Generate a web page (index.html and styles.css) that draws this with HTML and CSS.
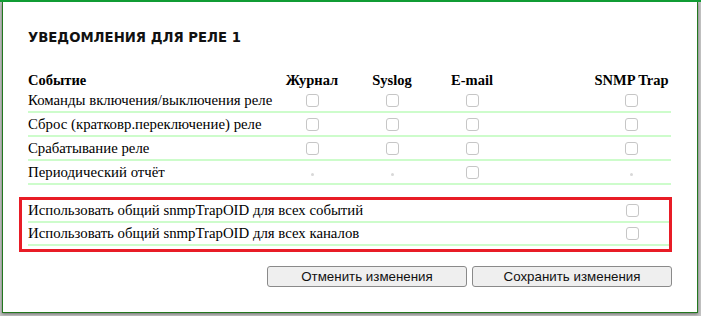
FILE: index.html
```html
<!DOCTYPE html>
<html>
<head>
	<meta charset='utf-8'/>
	<title>Уведомления для реле 1</title>
	<link rel="stylesheet" href="styles.css">
</head>
<body>

	<div class="dialog">
		<h1 class="title">УВЕДОМЛЕНИЯ ДЛЯ РЕЛЕ 1</h1>

		<div class="grid head">
			<div class="name">Событие</div>
			<div class="c">Журнал</div>
			<div class="c">Syslog</div>
			<div class="c">E-mail</div>
			<div></div>
			<div class="c">SNMP Trap</div>
		</div>

		<div class="grid row">
			<div class="name">Команды включения/выключения реле</div>
			<div class="c"><input type="checkbox"/></div>
			<div class="c"><input type="checkbox"/></div>
			<div class="c"><input type="checkbox"/></div>
			<div></div>
			<div class="c"><input type="checkbox"/></div>
		</div>
		<div class="grid row">
			<div class="name">Сброс (кратковр.переключение) реле</div>
			<div class="c"><input type="checkbox"/></div>
			<div class="c"><input type="checkbox"/></div>
			<div class="c"><input type="checkbox"/></div>
			<div></div>
			<div class="c"><input type="checkbox"/></div>
		</div>
		<div class="grid row">
			<div class="name">Срабатывание реле</div>
			<div class="c"><input type="checkbox"/></div>
			<div class="c"><input type="checkbox"/></div>
			<div class="c"><input type="checkbox"/></div>
			<div></div>
			<div class="c"><input type="checkbox"/></div>
		</div>
		<div class="grid row">
			<div class="name">Периодический отчёт</div>
			<div class="c"><span class="dot"></span></div>
			<div class="c"><span class="dot"></span></div>
			<div class="c"><input type="checkbox"/></div>
			<div></div>
			<div class="c"><span class="dot"></span></div>
		</div>

		<div class="highlight">
			<div class="opt">
				<div class="name">Использовать общий snmpTrapOID для всех событий</div>
				<input type="checkbox"/>
			</div>
			<div class="opt">
				<div class="name">Использовать общий snmpTrapOID для всех каналов</div>
				<input type="checkbox"/>
			</div>
		</div>

		<div class="buttons">
			<button>Отменить изменения</button>
			<button>Сохранить изменения</button>
		</div>
	</div>

</body>
</html>
```

FILE: styles.css
```css
*{
	margin:0;padding:0;
	box-sizing:border-box;
}
body{
	background:#c4c4c4;
	width:701px;
	height:316px;
	overflow:hidden;
	border-top:2px solid #109c34;
	font-family:"Liberation Serif","Times New Roman",serif;
	font-size:14.8px;
	color:#000;
}

.dialog{
	width:696px;
	height:311px;
	margin-left:2px;
	background:#fff;
	border:1px solid #23781f;
	border-top:0;
	box-shadow:0 1px 3px rgba(0,0,0,0.45);
	padding:0 0 0 25px;
}

.title{
	font-family:"DejaVu Sans",Verdana,sans-serif;
	font-size:13.25px;
	font-weight:bold;
	color:#111;
	padding-top:27px;
	line-height:18px;
	height:64px;
}

.name{
	white-space:nowrap;
}

.grid{
	display:grid;
	grid-template-columns:244px 80px 80px 80px 80px 79px;
	align-items:center;
	width:643px;
}
.grid .c{
	text-align:center;
	display:flex;
	justify-content:center;
	align-items:center;
}
.head{
	height:23px;
	font-size:14.5px;
	font-weight:bold;
	align-items:end;
	line-height:18px;
}
.head .c{
	align-items:end;
}
.row{
	height:24px;
	border-bottom:2px solid #cdfccb;
	padding-top:1px;
}

input[type=checkbox]{
	-webkit-appearance:none;
	appearance:none;
	width:13px;
	height:13px;
	border:1px solid #c6c6c6;
	border-radius:3px;
	background:#fff;
	display:block;
}
.dot{
	width:3px;
	height:3px;
	border-radius:50%;
	background:#d8d8d8;
	margin-top:4px;
}

.highlight{
	width:653px;
	margin:12px 0 0 -9px;
	border:3px solid #e81c26;
	padding:0 0 3px 6px;
}
.opt{
	display:flex;
	align-items:center;
	justify-content:space-between;
	width:641px;
	height:23px;
	border-bottom:2px solid #cdfccb;
	padding-right:30px;
}

.buttons{
	display:flex;
	justify-content:flex-end;
	gap:5px;
	width:644px;
	margin-top:14px;
}
.buttons button{
	width:200px;
	height:21px;
	font-family:"Liberation Sans",Arial,sans-serif;
	font-size:13.33px;
	color:#111;
	background:#efefef;
	border:1px solid #8a8a8a;
	border-radius:3px;
}
```
